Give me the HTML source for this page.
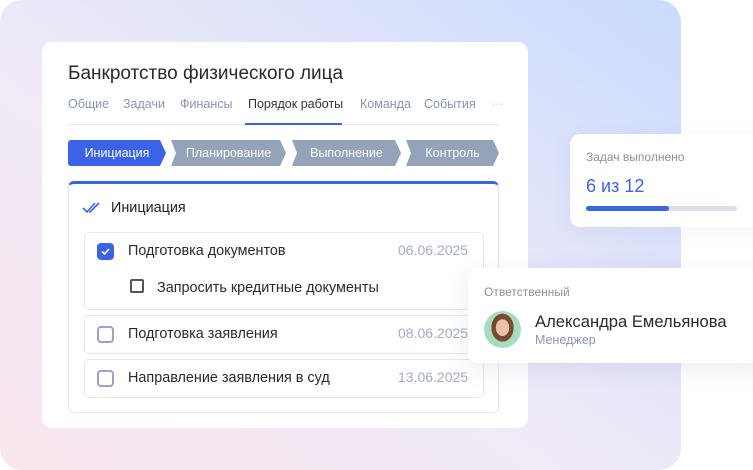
<!DOCTYPE html>
<html><head><meta charset="utf-8"><style>
*{margin:0;padding:0;box-sizing:border-box}
body{width:753px;height:470px;background:#fff;position:relative;overflow:hidden;font-family:"Liberation Sans",sans-serif;color:#222}
.bg{position:absolute;left:0;top:0;width:681px;height:470px;border-radius:22px;background:linear-gradient(35deg,#f9e6ee 0%,#f0eaf8 45%,#c9dbfc 100%)}
.card{position:absolute;background:#fff;border-radius:10px}
.abs{position:absolute;white-space:nowrap}
.tab{position:absolute;top:97px;font-size:12.5px;color:#8a93b5}
.step{position:absolute;top:140px;height:26px;color:#fff;font-size:12.5px;line-height:26px;text-align:center;background:#94a3b8;clip-path:polygon(0 0,calc(100% - 6px) 0,100% 50%,calc(100% - 6px) 100%,0 100%,5px 50%)}
.item{position:absolute;left:84px;width:400px;border:1px solid #e6e8f0;border-radius:5px}
.cb{position:absolute;width:17px;height:17px;border:2px solid #9aa3c2;border-radius:4px}
.t{position:absolute;font-size:14.4px;color:#2a2a2a}
.d{position:absolute;font-size:14px;color:#a4abc6}
</style></head><body>
<div class="bg"></div>
<div class="card" style="left:42px;top:42px;width:486px;height:386px"></div>
<div class="abs" style="left:68px;top:63px;font-size:19px;color:#2a2a2a">Банкротство физического лица</div>
<div class="tab" style="left:68px">Общие</div>
<div class="tab" style="left:123px">Задачи</div>
<div class="tab" style="left:180px">Финансы</div>
<div class="tab" style="left:248px;color:#333">Порядок работы</div>
<div class="tab" style="left:360px">Команда</div>
<div class="tab" style="left:424px">События</div>
<div class="tab" style="left:491px;color:#c9cde0">···</div>
<div class="abs" style="left:68px;top:124px;width:431px;height:1px;background:#e4e7f0"></div>
<div class="abs" style="left:245px;top:123px;width:97px;height:2px;background:#3b63e6"></div>
<div class="step" style="left:68px;width:98px;background:#3b63e6;clip-path:polygon(0 0,calc(100% - 6px) 0,100% 50%,calc(100% - 6px) 100%,0 100%);border-radius:3px 0 0 3px">Инициация</div>
<div class="step" style="left:171px;width:115px">Планирование</div>
<div class="step" style="left:292px;width:109px">Выполнение</div>
<div class="step" style="left:406px;width:93px">Контроль</div>
<div class="abs" style="left:68px;top:181px;width:431px;height:232px;border:1px solid #e4e7f0;border-top:3px solid #3b63e6;border-radius:6px"></div>
<svg class="abs" style="left:82px;top:202px" width="20" height="12" viewBox="0 0 20 12"><path d="M1 6l4 4 8-9M7 10l1 0 9-9" fill="none" stroke="#3b63e6" stroke-width="1.6"/></svg>
<div class="abs" style="left:111px;top:200px;font-size:14.4px">Инициация</div>
<div class="item" style="top:232px;height:78px"></div>
<div class="cb" style="left:97px;top:243px;background:#3b63e6;border-color:#3b63e6"></div>
<svg class="abs" style="left:100px;top:246px" width="11" height="11"><path d="M2 5.5l2.5 2.5 4.5-5" fill="none" stroke="#fff" stroke-width="1.6"/></svg>
<div class="t" style="left:128px;top:243px">Подготовка документов</div>
<div class="d" style="left:398px;top:242px">06.06.2025</div>
<div class="cb" style="left:130px;top:279px;width:14px;height:14px;border-color:#555;border-radius:2px"></div>
<div class="t" style="left:157px;top:280px">Запросить кредитные документы</div>
<div class="item" style="top:315px;height:39px"></div>
<div class="cb" style="left:97px;top:326px"></div>
<div class="t" style="left:128px;top:326px">Подготовка заявления</div>
<div class="d" style="left:398px;top:325px">08.06.2025</div>
<div class="item" style="top:359px;height:39px"></div>
<div class="cb" style="left:97px;top:370px"></div>
<div class="t" style="left:128px;top:370px">Направление заявления в суд</div>
<div class="d" style="left:398px;top:369px">13.06.2025</div>

<div class="card" style="left:570px;top:134px;width:200px;height:93px;box-shadow:0 4px 20px rgba(100,110,160,.08)"></div>
<div class="abs" style="left:586px;top:150px;font-size:12px;color:#8a8fa3">Задач выполнено</div>
<div class="abs" style="left:586px;top:176px;font-size:18px;color:#3b63e6">6 из 12</div>
<div class="abs" style="left:586px;top:206px;width:151px;height:5px;border-radius:3px;background:#dde0ea"></div>
<div class="abs" style="left:586px;top:206px;width:83px;height:5px;border-radius:3px;background:#3b63e6"></div>

<div class="card" style="left:468px;top:268px;width:300px;height:95px;box-shadow:0 6px 24px rgba(100,110,160,.14)"></div>
<div class="abs" style="left:484px;top:285px;font-size:12px;color:#8a8fa3">Ответственный</div>
<div class="abs" style="left:484px;top:311px;width:37px;height:37px;border-radius:50%;background:radial-gradient(ellipse 40% 50% at 50% 45%,#e8c3a8 0 45%,#7a4a30 46% 75%,#a8dcc0 76%)"></div>
<div class="abs" style="left:535px;top:312px;font-size:16.6px;color:#2a2a2a">Александра Емельянова</div>
<div class="abs" style="left:535px;top:333px;font-size:12.5px;color:#8a93b5">Менеджер</div>
</body></html>
